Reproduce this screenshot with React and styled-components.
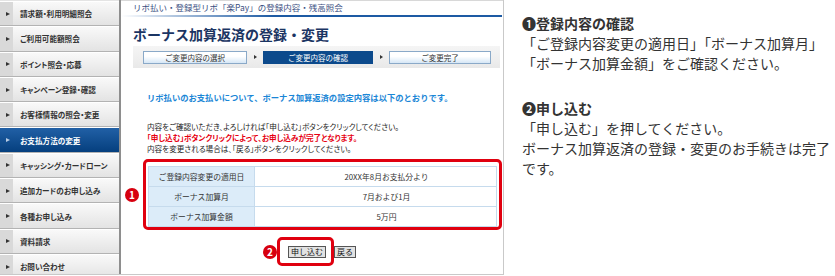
import styled, { createGlobalStyle } from 'styled-components';

const GlobalStyle = createGlobalStyle`
  body {
    margin: 0;
    background: #fff;
    font-family: "Noto Sans CJK JP", "Noto Sans", sans-serif;
  }
`;

const Page = styled.div`
  display: flex;
  width: 835px;
  height: 276px;
  overflow: hidden;
`;

const Shot = styled.div`
  display: flex;
  flex: 0 0 503px;
  height: 274px;
  border-right: 1px solid #c9c9c9;
  border-bottom: 1px solid #c9c9c9;
  overflow: hidden;
`;

const Sidebar = styled.ul`
  list-style: none;
  margin: 0;
  padding: 1px 0 0;
  width: 119px;
  border-right: 2px solid #8e8e8e;
  display: flex;
  flex-direction: column;
  background: #e4e4e4;
`;

const NavItem = styled.li`
  flex: 0 0 25.3px;
  box-sizing: border-box;
  display: flex;
  align-items: center;
  gap: 10px;
  padding-left: 6px;
  font-size: 7.6px;
  font-weight: bold;
  font-feature-settings: "palt";
  white-space: nowrap;
  overflow: hidden;
  color: ${(p) => (p.$active ? '#fff' : '#333')};
  background: ${(p) =>
    p.$active
      ? 'linear-gradient(#2160a6, #053f7e)'
      : 'linear-gradient(to right, #d9d9d9 0 13px, transparent 13px), linear-gradient(#f9f9f9, #e3e3e3)'};
  border-top: 1px solid #fff;
  border-bottom: 1px solid #b3b3b3;

  &::before {
    content: '';
    flex: none;
    border-left: 4px solid ${(p) => (p.$active ? '#b8cce4' : '#333')};
    border-top: 2.5px solid transparent;
    border-bottom: 2.5px solid transparent;
  }
`;

const Main = styled.main`
  flex: 1;
  display: flex;
  flex-direction: column;
  padding: 0 1px 0 12px;
  border-top: 1px solid #d8d8d8;
`;

const Crumb = styled.div`
  font-size: 8.5px;
  line-height: 12px;
  color: #3b4f82;
  white-space: nowrap;
`;

const HeadRule = styled.div`
  height: 2px;
  margin: 2px 0 0 -12px;
  background: linear-gradient(to right, #fff, #1d5aa3 40%);
`;

const Title = styled.h1`
  margin: 7px 0 0;
  font-size: 14px;
  line-height: 20px;
  font-weight: bold;
  color: #1b3563;
  white-space: nowrap;
`;

const StepBar = styled.div`
  display: flex;
  align-items: center;
  height: 22px;
  margin: 2px 2px 0 0;
  padding-left: 10px;
  background: linear-gradient(#f5f5f5, #e9e9e9);
`;

const Step = styled.div`
  box-sizing: border-box;
  width: ${(p) => p.$w}px;
  height: 13px;
  font-size: 7.5px;
  line-height: 11px;
  text-align: center;
  white-space: nowrap;
  color: ${(p) => (p.$current ? '#fff' : '#333')};
  background: ${(p) => (p.$current ? '#0c4a8c' : 'linear-gradient(#fff 40%, #d6e7f6)')};
  border: 1px solid ${(p) => (p.$current ? '#0c4a8c' : '#8aa9c8')};
`;

const StepArrow = styled.div`
  width: 16px;
  display: flex;
  justify-content: center;

  &::before {
    content: '';
    border-left: 3px solid #333;
    border-top: 2.5px solid transparent;
    border-bottom: 2.5px solid transparent;
  }
`;

const Lead = styled.p`
  margin: 23px 0 0 14px;
  font-size: 8.3px;
  line-height: 12px;
  font-weight: bold;
  color: #1a86d6;
  white-space: nowrap;
`;

const Notice = styled.p`
  margin: 18px 0 0 14px;
  font-size: 7.6px;
  line-height: 11px;
  color: #222;
  white-space: nowrap;
  font-feature-settings: "palt";
`;

const Alert = styled.span`
  color: #e60012;
  font-weight: bold;
`;

const Marked = styled.div`
  display: flex;
  align-items: center;
  gap: ${(p) => p.$gap}px;
  margin: ${(p) => p.$margin};
`;

const Marker = styled.span`
  flex: 0 0 14px;
  height: 14px;
  border-radius: 50%;
  background: #d7000f;
  color: #fff;
  font-size: 10px;
  font-weight: bold;
  line-height: 14px;
  text-align: center;
`;

const RedFrame = styled.div`
  flex: ${(p) => (p.$grow ? 1 : 'none')};
  border: 3px solid #e0000f;
  border-radius: 5px;
  padding: ${(p) => p.$pad};
  display: flex;
  align-items: center;
`;

const Table = styled.table`
  flex: 1;
  border-collapse: collapse;
  border: 1px solid #bcd2e6;
  font-size: 7.8px;
  color: #333;

  th,
  td {
    height: 19px;
    padding: 0;
    border: 1px solid #c6dbed;
    font-weight: normal;
    text-align: center;
    white-space: nowrap;
  }

  th {
    width: 105px;
    background: #dcecf9;
  }

  td {
    padding-left: 22px;
    background: #fff;
  }
`;

const Button = styled.button`
  height: 12px;
  padding: 0 2px;
  font-family: inherit;
  font-size: 8px;
  line-height: 10px;
  color: #111;
  background: #e2e2e2;
  border: 1px solid #555;
  border-radius: 0;
`;

const Notes = styled.aside`
  flex: 1;
  padding: 13px 0 0 18px;
  font-size: 14px;
  line-height: 20px;
  color: #333;
`;

const NoteBlock = styled.section`
  margin-bottom: 25px;
`;

const NoteHead = styled.div`
  font-weight: bold;
`;

const menu = [
  '請求額・利用明細照会',
  'ご利用可能額照会',
  'ポイント照会・応募',
  'キャンペーン登録・確認',
  'お客様情報の照会・変更',
  'お支払方法の変更',
  'キャッシング・カードローン',
  '追加カードのお申し込み',
  '各種お申し込み',
  '資料請求',
  'お問い合わせ',
];

const rows = [
  ['ご登録内容変更の適用日', '20XX年8月お支払分より'],
  ['ボーナス加算月', '7月および1月'],
  ['ボーナス加算金額', '5万円'],
];

const App = () => (
  <Page>
    <GlobalStyle />
    <Shot>
      <Sidebar>
        {menu.map((m) => (
          <NavItem key={m} $active={m === 'お支払方法の変更'}>
            {m}
          </NavItem>
        ))}
      </Sidebar>
      <Main>
        <Crumb>リボ払い・登録型リボ「楽Pay」の登録内容・残高照会</Crumb>
        <HeadRule />
        <Title>ボーナス加算返済の登録・変更</Title>
        <StepBar>
          <Step $w={104}>ご変更内容の選択</Step>
          <StepArrow />
          <Step $w={110} $current>
            ご変更内容の確認
          </Step>
          <StepArrow />
          <Step $w={102}>ご変更完了</Step>
        </StepBar>
        <Lead>リボ払いのお支払いについて、ボーナス加算返済の設定内容は以下のとおりです。</Lead>
        <Notice>
          内容をご確認いただき、よろしければ「申し込む」ボタンをクリックしてください。
          <br />
          <Alert>「申し込む」ボタンクリックによって、お申し込みが完了となります。</Alert>
          <br />
          内容を変更される場合は、「戻る」ボタンをクリックしてください。
        </Notice>
        <Marked $gap={4} $margin="5px 0 0 -8px">
          <Marker>1</Marker>
          <RedFrame $grow $pad="4px 2px 0 2px">
            <Table>
              <tbody>
                {rows.map(([k, v]) => (
                  <tr key={k}>
                    <th>{k}</th>
                    <td>{v}</td>
                  </tr>
                ))}
              </tbody>
            </Table>
          </RedFrame>
        </Marked>
        <Marked $gap={0} $margin="7px 0 0 130px">
          <Marker>2</Marker>
          <RedFrame $pad="6px 5px 5px 8px">
            <Button>申し込む</Button>
          </RedFrame>
          <Button>戻る</Button>
        </Marked>
      </Main>
    </Shot>
    <Notes>
      <NoteBlock>
        <NoteHead>❶登録内容の確認</NoteHead>
        「ご登録内容変更の適用日」「ボーナス加算月」
        <br />
        「ボーナス加算金額」をご確認ください。
      </NoteBlock>
      <NoteBlock>
        <NoteHead>❷申し込む</NoteHead>
        「申し込む」を押してください。
        <br />
        ボーナス加算返済の登録・変更のお手続きは完了です。
      </NoteBlock>
    </Notes>
  </Page>
);

export default App;
